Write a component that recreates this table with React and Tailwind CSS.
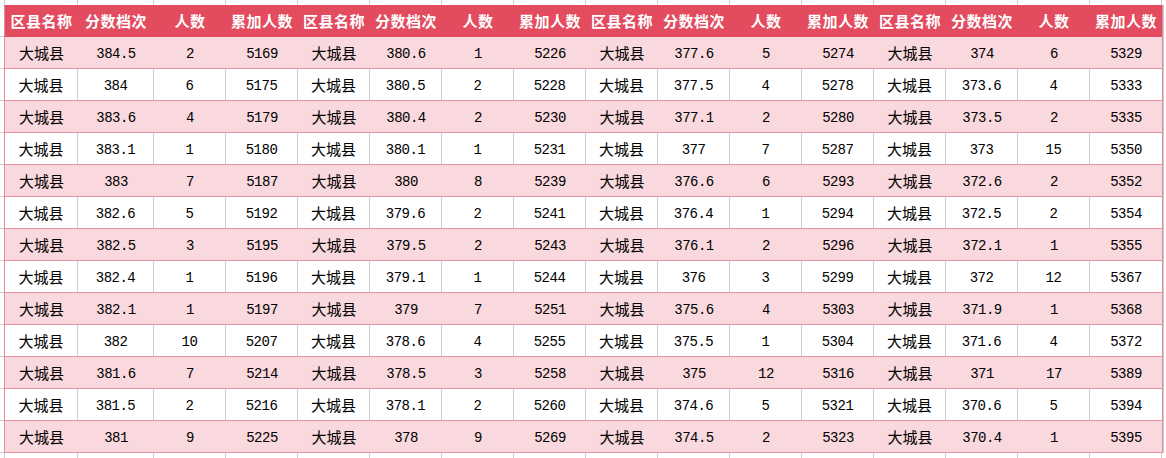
const groups = [
  [
    ['384.5', 2, 5169], ['384', 6, 5175], ['383.6', 4, 5179], ['383.1', 1, 5180], ['383', 7, 5187],
    ['382.6', 5, 5192], ['382.5', 3, 5195], ['382.4', 1, 5196], ['382.1', 1, 5197], ['382', 10, 5207],
    ['381.6', 7, 5214], ['381.5', 2, 5216], ['381', 9, 5225],
  ],
  [
    ['380.6', 1, 5226], ['380.5', 2, 5228], ['380.4', 2, 5230], ['380.1', 1, 5231], ['380', 8, 5239],
    ['379.6', 2, 5241], ['379.5', 2, 5243], ['379.1', 1, 5244], ['379', 7, 5251], ['378.6', 4, 5255],
    ['378.5', 3, 5258], ['378.1', 2, 5260], ['378', 9, 5269],
  ],
  [
    ['377.6', 5, 5274], ['377.5', 4, 5278], ['377.1', 2, 5280], ['377', 7, 5287], ['376.6', 6, 5293],
    ['376.4', 1, 5294], ['376.1', 2, 5296], ['376', 3, 5299], ['375.6', 4, 5303], ['375.5', 1, 5304],
    ['375', 12, 5316], ['374.6', 5, 5321], ['374.5', 2, 5323],
  ],
  [
    ['374', 6, 5329], ['373.6', 4, 5333], ['373.5', 2, 5335], ['373', 15, 5350], ['372.6', 2, 5352],
    ['372.5', 2, 5354], ['372.1', 1, 5355], ['372', 12, 5367], ['371.9', 1, 5368], ['371.6', 4, 5372],
    ['371', 17, 5389], ['370.6', 5, 5394], ['370.4', 1, 5395],
  ],
];

const headers = ['区县名称', '分数档次', '人数', '累加人数'];

// column widths in px (16 columns)
const widths = [73, 76, 72, 72, 72, 72, 72, 72, 72, 72, 72, 72, 72, 72, 72, 72];
const widthCls = {
  73: 'w-[73px]',
  76: 'w-[76px]',
  72: 'w-[72px]',
};

const cjk = "font-['Noto_Sans_CJK_SC',sans-serif]";
const mono = "font-['Liberation_Mono',monospace]";

function rowCells(r) {
  const cells = [];
  groups.forEach((g) => {
    const [score, n, cum] = g[r];
    cells.push({ text: '大城县', cjk: true });
    cells.push({ text: score });
    cells.push({ text: String(n) });
    cells.push({ text: String(cum) });
  });
  return cells;
}

function GridStrip() {
  // plain sheet gridlines above and below the table
  return (
    <div className="flex h-[5px]">
      <div className="w-[5px] shrink-0 border-r border-[#c8cddc]" />
      {widths.map((w, i) => (
        <div key={i} className={`${widthCls[w]} shrink-0 border-r border-[#c8cddc]`} />
      ))}
      <div className="flex-1" />
    </div>
  );
}

function SideStrip() {
  return (
    <div className="flex flex-col w-[4px] shrink-0">
      {Array.from({ length: 14 }).map((_, i) => (
        <div key={i} className="h-[32px] border-b border-[#c8cddc]" />
      ))}
    </div>
  );
}

export default function App() {
  const rows = groups[0].map((_, r) => rowCells(r));

  return (
    <div className="w-[1166px] h-[458px] bg-white overflow-hidden">
      <GridStrip />
      <div className="flex">
        <SideStrip />
        <div className="flex flex-col border-l border-r border-[#e58c9a]">
          {/* header */}
          <div className="flex h-[32px] bg-[#e34c5f]">
            {widths.map((w, i) => (
              <div
                key={i}
                className={`${widthCls[w]} shrink-0 flex items-center justify-center pt-[1px] text-white font-bold text-[15px] tracking-[0.5px] ${cjk}`}
              >
                {headers[i % 4]}
              </div>
            ))}
          </div>
          {rows.map((cells, r) => {
            const pink = r % 2 === 0;
            return (
              <div
                key={r}
                className={`flex h-[32px] border-b border-[#e8909e] ${pink ? 'bg-[#f9d8de]' : 'bg-white'}`}
              >
                {cells.map((c, i) => (
                  <div
                    key={i}
                    className={`${widthCls[widths[i]]} shrink-0 flex items-center justify-center text-black ${
                      !pink && i < cells.length - 1 ? 'border-r border-[#c8cddc]' : ''
                    } ${c.cjk ? `pt-[2px] text-[15px] ${cjk}` : `pt-[4px] text-[14px] tracking-[-0.5px] ${mono}`}`}
                  >
                    {c.text}
                  </div>
                ))}
              </div>
            );
          })}
        </div>
        <div className="flex-1 flex flex-col border-r border-[#c8cddc] mr-[2px]">
          {Array.from({ length: 14 }).map((_, i) => (
            <div key={i} className="h-[32px] border-b border-[#c8cddc]" />
          ))}
        </div>
      </div>
      <GridStrip />
    </div>
  );
}
